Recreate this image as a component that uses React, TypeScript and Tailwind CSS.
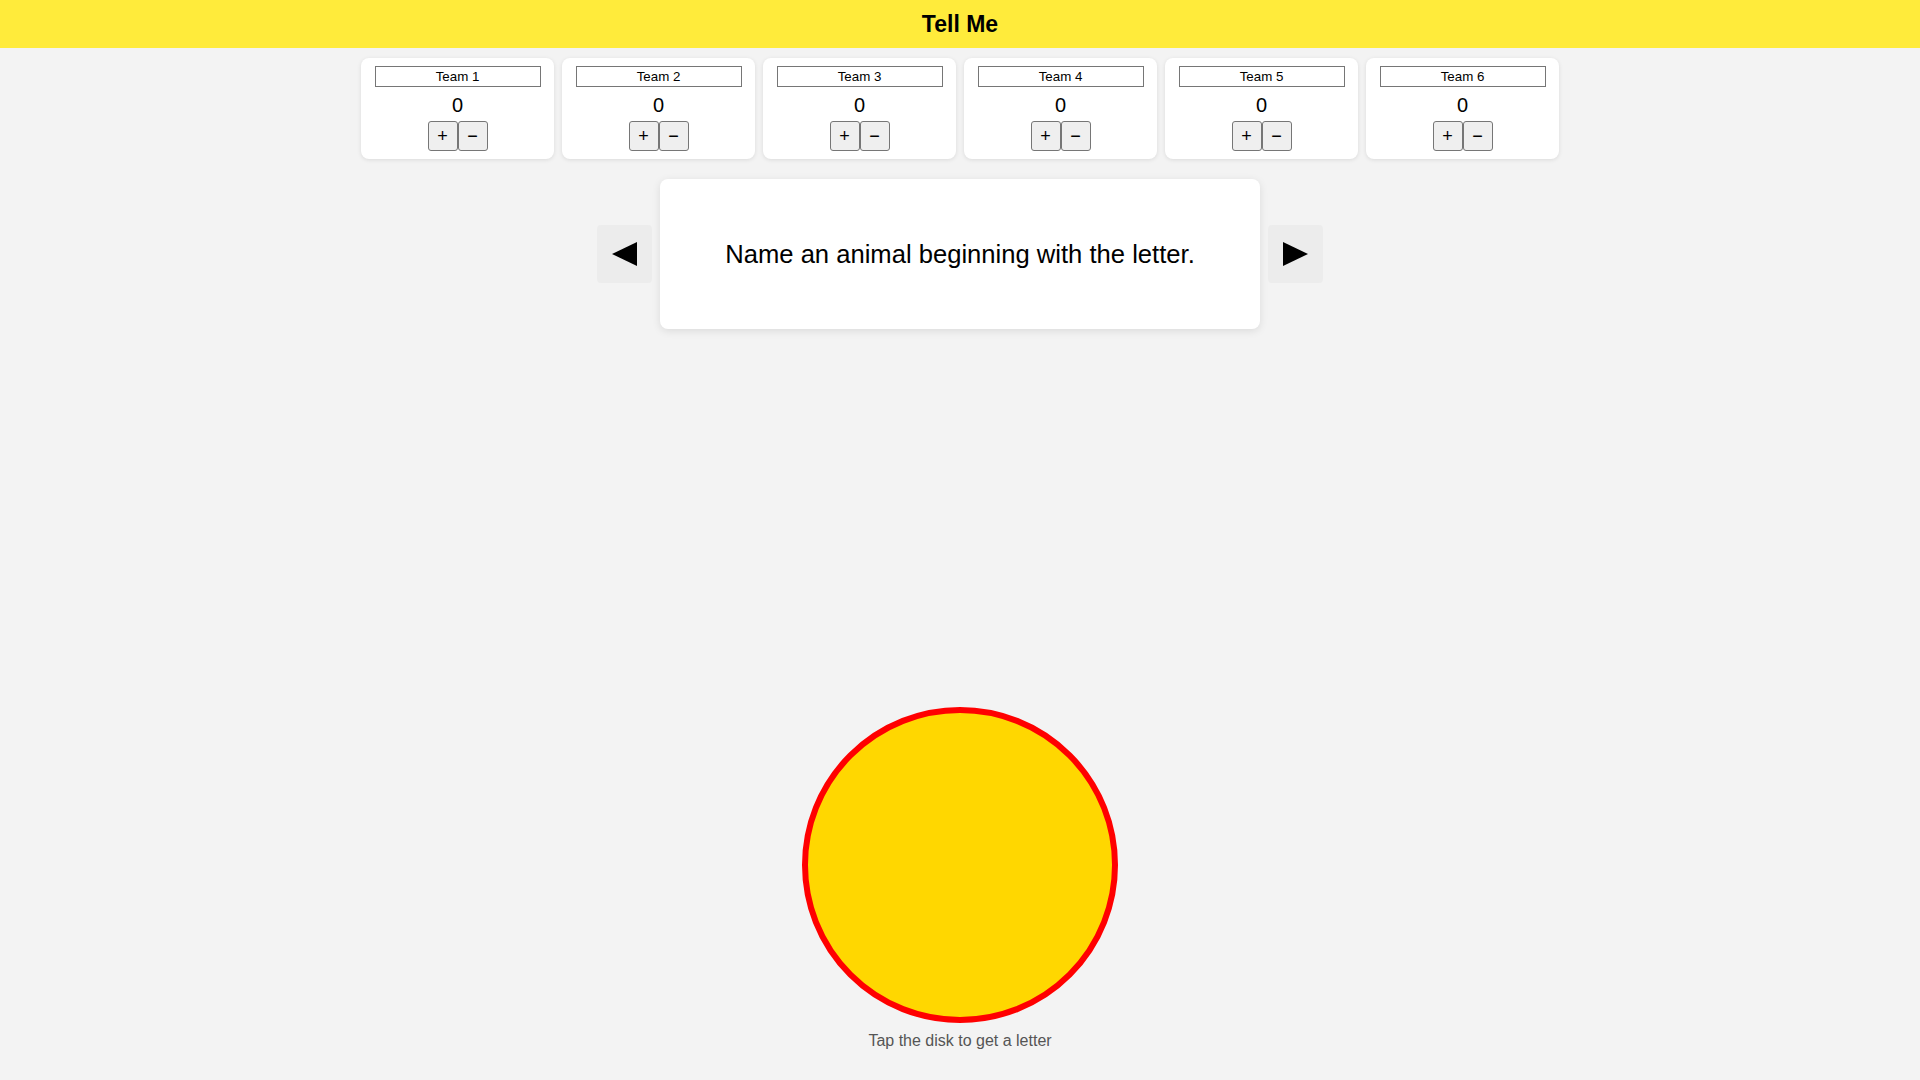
import React, { useState } from "react";

const FONT = { fontFamily: '"Liberation Sans", Arial, sans-serif' };

function TeamCard({ name }: { name: string }) {
  const [score, setScore] = useState(0);
  const [title, setTitle] = useState(name);
  return (
    <div className="w-[193px] bg-white rounded-[8px] shadow-[0_1px_4px_rgba(0,0,0,0.1)] pt-[8px] pb-[8px] flex flex-col items-center">
      <input
        value={title}
        onChange={(e) => setTitle(e.target.value)}
        className="w-[166px] h-[21px] border border-[#767676] bg-white text-center text-[13.33px] text-black px-[2px] outline-none"
      />
      <div className="mt-[7px] mb-[4px] text-[20px] leading-[23px] text-black">{score}</div>
      <div className="flex">
        <button
          onClick={() => setScore(score + 1)}
          className="w-[30px] h-[30px] bg-[#efefef] border border-[#767676] rounded-[3px] text-[18px] text-black flex items-center justify-center"
        >
          +
        </button>
        <button
          onClick={() => setScore(score - 1)}
          className="w-[30px] h-[30px] bg-[#efefef] border border-[#767676] rounded-[3px] text-[18px] text-black flex items-center justify-center"
        >
          −
        </button>
      </div>
    </div>
  );
}

function Arrow({ dir }: { dir: "left" | "right" }) {
  return (
    <button className="w-[55px] h-[58px] bg-[#ececec] rounded-[4px] flex items-center justify-center">
      <svg width="25" height="24" viewBox="0 0 25 24">
        {dir === "left" ? (
          <polygon points="0,12 25,0 25,24" fill="#000" />
        ) : (
          <polygon points="25,12 0,0 0,24" fill="#000" />
        )}
      </svg>
    </button>
  );
}

export default function App() {
  const teams = ["Team 1", "Team 2", "Team 3", "Team 4", "Team 5", "Team 6"];
  return (
    <div className="min-h-screen bg-[#f3f3f3] flex flex-col" style={FONT}>
      <header className="h-[48px] bg-[#ffeb3b] flex items-center justify-center">
        <h1 className="text-[23px] font-bold text-black">Tell Me</h1>
      </header>
      <div className="flex justify-center gap-2 mt-[10px]">
        {teams.map((t) => (
          <TeamCard key={t} name={t} />
        ))}
      </div>
      <div className="flex justify-center items-center gap-2 mt-[20px]">
        <Arrow dir="left" />
        <div className="w-[600px] h-[150px] bg-white rounded-[8px] shadow-[0_2px_8px_rgba(0,0,0,0.1)] flex items-center justify-center">
          <p className="text-[25.6px] text-black">Name an animal beginning with the letter.</p>
        </div>
        <Arrow dir="right" />
      </div>
      <div className="flex-1 flex flex-col items-center justify-end pb-[30px]">
        <div className="w-[316px] h-[316px] rounded-full bg-[#ffd700] border-[6px] border-[#ff0000] cursor-pointer" />
        <p className="mt-[8px] text-[16px] leading-[19px] text-[#555555]">Tap the disk to get a letter</p>
      </div>
    </div>
  );
}
